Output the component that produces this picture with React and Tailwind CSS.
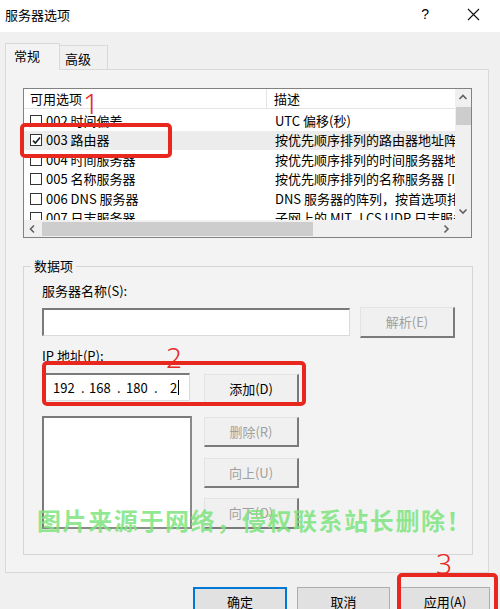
import React from 'react';

const rows = [
  { name: '002 时间偏差', desc: 'UTC 偏移(秒)', checked: false },
  { name: '003 路由器', desc: '按优先顺序排列的路由器地址阵列', checked: true, selected: true },
  { name: '004 时间服务器', desc: '按优先顺序排列的时间服务器地址', checked: false },
  { name: '005 名称服务器', desc: '按优先顺序排列的名称服务器 [IEN 116]', checked: false },
  { name: '006 DNS 服务器', desc: 'DNS 服务器的阵列，按首选项排列', checked: false },
  { name: '007 日志服务器', desc: '子网上的 MIT_LCS UDP 日志服务器', checked: false },
];

function CheckBox({ checked }) {
  return (
    <span className="w-[12px] h-[12px] border border-[#333333] bg-white flex items-center justify-center shrink-0">
      {checked && (
        <svg width="9" height="9" viewBox="0 0 9 9">
          <path d="M1 4.6 L3.4 7 L8 1.6" fill="none" stroke="#1a1a1a" strokeWidth="1.6" />
        </svg>
      )}
    </span>
  );
}

function Chevron({ dir }) {
  const d = {
    up: 'M1.5 6 L5 2.5 L8.5 6',
    down: 'M1.5 3.5 L5 7 L8.5 3.5',
    left: 'M6 1.5 L2.5 5 L6 8.5',
    right: 'M3.5 1.5 L7 5 L3.5 8.5',
  }[dir];
  return (
    <svg width="10" height="10" viewBox="0 0 10 10">
      <path d={d} fill="none" stroke="#606060" strokeWidth="1.6" />
    </svg>
  );
}

function RaisedButton({ children, disabled, className }) {
  return (
    <div
      className={`flex items-center justify-center bg-[#f0f0f0] border-t border-l border-t-[#e3e3e3] border-l-[#e3e3e3] border-r-2 border-b-2 border-r-[#7a7a7a] border-b-[#7a7a7a] text-[13px] ${
        disabled ? 'text-[#a0a0a0]' : 'text-black'
      } ${className}`}
    >
      {children}
    </div>
  );
}

export default function App() {
  return (
    <div className="relative w-[500px] h-[609px] overflow-hidden bg-[#f0f0f0] text-black font-['Microsoft_YaHei_UI','Noto_Sans_CJK_SC',sans-serif] text-[13px] leading-[18px]">
      {/* 标题栏 */}
      <div className="h-[32px] bg-white flex items-center pl-[5px] pr-[20px]">
        <span className="text-[13px] -mt-[2px]">服务器选项</span>
        <span className="ml-auto mr-[38px] text-[14px] font-['Liberation_Sans',sans-serif] -mt-[4px]">?</span>
        <svg width="13" height="13" viewBox="0 0 13 13" className="-mt-[3px]">
          <path d="M1 1 L12 12 M12 1 L1 12" stroke="#111111" strokeWidth="1.1" />
        </svg>
      </div>

      {/* 选项卡 */}
      <div className="h-[37px] flex items-end pl-[5px]">
        <div className="relative z-10 -mb-px w-[55px] h-[27px] bg-[#f3f3f3] border border-b-0 border-[#d9d9d9] flex items-start pl-[8px] pt-[3px]">
          常规
        </div>
        <div className="w-[48px] h-[24px] bg-[#f0f0f0] border border-l-0 border-b-0 border-[#d9d9d9] flex items-start pl-[5px] pt-[4px]">
          高级
        </div>
      </div>

      {/* 选项卡页 */}
      <div className="ml-[5px] w-[484px] h-[504px] bg-[#f3f3f3] border border-[#d9d9d9] pl-[17px] pt-[18px]">
        {/* 可用选项列表 */}
        <div className="w-[449px] h-[150px] border border-[#828282] bg-white flex flex-col">
          <div className="flex h-[131px]">
            <div className="w-[431px] overflow-hidden">
              <div className="flex h-[20px] border-b border-[#e5e5e5] items-center">
                <div className="w-[243px] shrink-0 pl-[6px] h-full flex items-center border-r border-[#e5e5e5]">可用选项</div>
                <div className="pl-[7px]">描述</div>
              </div>
              <div className="pt-[2px]">
                {rows.map((r) => (
                  <div
                    key={r.name}
                    className={`flex h-[19.5px] items-center whitespace-nowrap ${r.selected ? 'bg-[#ececec]' : ''}`}
                  >
                    <div className="w-[243px] shrink-0 pl-[6px] flex items-center gap-[4px]">
                      <CheckBox checked={r.checked} />
                      <span>{r.name}</span>
                    </div>
                    <div className="flex-1 min-w-0 pl-[8px] overflow-hidden">{r.desc}</div>
                  </div>
                ))}
              </div>
            </div>
            <div className="w-[16px] bg-[#f0f0f0] flex flex-col items-center">
              <div className="h-[18px] flex items-center justify-center">
                <Chevron dir="up" />
              </div>
              <div className="w-[15px] h-[18px] bg-[#cdcdcd]" />
              <div className="mt-auto h-[18px] flex items-center justify-center">
                <Chevron dir="down" />
              </div>
            </div>
          </div>
          <div className="flex h-[17px]">
            <div className="w-[431px] bg-[#f0f0f0] flex items-center">
              <div className="w-[18px] flex justify-center">
                <Chevron dir="left" />
              </div>
              <div className="w-[271px] h-[14px] bg-[#cdcdcd]" />
              <div className="ml-auto w-[18px] flex justify-center">
                <Chevron dir="right" />
              </div>
            </div>
            <div className="w-[16px] bg-[#f0f0f0]" />
          </div>
        </div>

        {/* 数据项 */}
        <div className="mt-[28px] w-[450px] h-[289px] border border-[#d5d5d5] pl-[18px]">
          <div className="-mt-[10px] -ml-[11px] w-fit px-[3px] bg-[#f3f3f3] h-[18px]">数据项</div>
          <div className="mt-[7px] h-[18px]">服务器名称(S):</div>
          <div className="mt-[7px] flex items-start">
            <div className="mt-[1px] w-[308px] h-[28px] bg-white border-t-2 border-l-2 border-t-[#7a7a7a] border-l-[#7a7a7a] border-r border-b border-r-[#dadada] border-b-[#dadada]" />
            <RaisedButton disabled className="ml-[10px] w-[95px] h-[31px]">解析(E)</RaisedButton>
          </div>
          <div className="mt-[9px] h-[18px]">IP 地址(P):</div>
          <div className="mt-[8px] flex items-start">
            <div className="ml-[2px] w-[146px] h-[28px] bg-white border-t-2 border-l-2 border-t-[#7a7a7a] border-l-[#7a7a7a] border-r border-b border-r-[#dadada] border-b-[#dadada] flex items-center pl-[7px] whitespace-nowrap">
              <span className="w-[28px]">192</span>
              <span className="w-[8px]">.</span>
              <span className="w-[28px]">168</span>
              <span className="w-[9px]">.</span>
              <span className="w-[28px]">180</span>
              <span className="w-[16px]">.</span>
              <span>2</span>
              <span className="ml-[1px] w-px h-[15px] bg-black" />
            </div>
            <RaisedButton className="ml-[14px] mt-[1px] w-[95px] h-[30px]">添加(D)</RaisedButton>
          </div>
          <div className="mt-[12px] flex items-start">
            <div className="w-[150px] h-[113px] bg-white border-t-2 border-l-2 border-t-[#7a7a7a] border-l-[#7a7a7a] border-r-2 border-b-2 border-r-[#8a8a8a] border-b-[#8a8a8a]" />
            <div className="ml-[12px] flex flex-col">
              <RaisedButton disabled className="mt-[1px] w-[95px] h-[30px]">删除(R)</RaisedButton>
              <RaisedButton disabled className="mt-[11px] w-[95px] h-[30px]">向上(U)</RaisedButton>
              <RaisedButton disabled className="mt-[10px] w-[95px] h-[31px]">向下(O)</RaisedButton>
            </div>
          </div>
        </div>
      </div>

      {/* 底部按钮 */}
      <div className="mt-[14px] flex justify-end pr-[10px] gap-[10px]">
        <div className="w-[94px] h-[30px] bg-[#e1e1e1] border-2 border-[#0078d7] flex items-center justify-center">确定</div>
        <div className="w-[93px] h-[30px] bg-[#e1e1e1] border border-[#adadad] flex items-center justify-center">取消</div>
        <div className="w-[90px] h-[30px] bg-[#e1e1e1] border border-[#adadad] flex items-center justify-center">应用(A)</div>
      </div>

      {/* 标注 */}
      <div className="absolute left-[20px] top-[123px] w-[152px] h-[35px] border-[4px] border-[#e8281f] rounded-[5px]" />
      <div className="absolute left-[42px] top-[361px] w-[264px] h-[45px] border-[4px] border-[#e8281f] rounded-[5px]" />
      <div className="absolute left-[397px] top-[573px] w-[101px] h-[44px] border-[4px] border-[#e8281f] rounded-[5px]" />
      <div className="absolute left-[83px] top-[86px] text-[28px] leading-[34px] font-light text-[#e8281f] font-['Noto_Sans',sans-serif]">1</div>
      <div className="absolute left-[166px] top-[340px] text-[28px] leading-[34px] font-light text-[#e8281f] font-['Noto_Sans',sans-serif]">2</div>
      <div className="absolute left-[436px] top-[546px] text-[28px] leading-[34px] font-light text-[#e8281f] font-['Noto_Sans',sans-serif]">3</div>

      {/* 水印 */}
      <div className="absolute left-[37px] top-[505px] text-[24px] leading-[30px] font-bold tracking-[1.6px] text-[#7ee47e]/85 whitespace-nowrap">
        图片来源于网络，侵权联系站长删除！
      </div>
    </div>
  );
}
